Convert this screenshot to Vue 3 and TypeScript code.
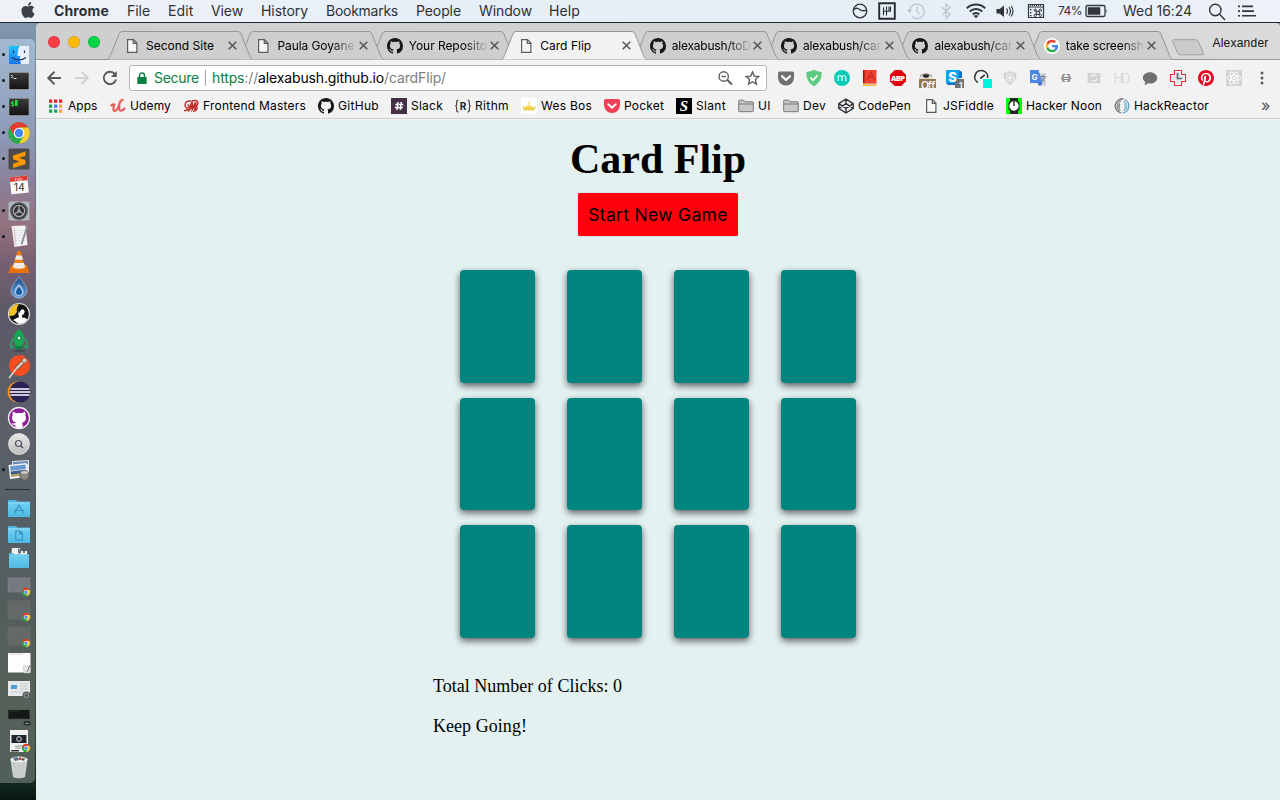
<script setup lang="ts">
import type { Directive } from 'vue'

/* Spreads or tightens a label so it fills the given width in pixels. */
const vFit: Directive<HTMLElement, number | undefined> = {
  mounted(el, binding) {
    if (!binding.value) return
    const count = (el.textContent ?? '').trim().length
    const natural = el.getBoundingClientRect().width
    el.style.letterSpacing = `${((binding.value - natural) / count).toFixed(3)}px`
  },
}

interface Label { text: string; x: number; w: number }
const menus: Label[] = [
  { text: 'Chrome', x: 54, w: 55 },
  { text: 'File', x: 127, w: 23 },
  { text: 'Edit', x: 168, w: 25.5 },
  { text: 'View', x: 211, w: 32 },
  { text: 'History', x: 261, w: 47 },
  { text: 'Bookmarks', x: 326, w: 72 },
  { text: 'People', x: 416, w: 45 },
  { text: 'Window', x: 479, w: 53 },
  { text: 'Help', x: 549, w: 31 },
]
const slot = (list: { x: number }[], i: number) => ({
  width: i + 1 < list.length ? `${list[i + 1].x - list[i].x}px` : 'auto',
})

const status = ['ring', 'tuning', 'history', 'bluetooth', 'wifi', 'sound', 'keys']
const statusSlots = [27, 29, 30, 30, 29, 31, 34]

interface Tab { title: string; icon: string; active?: boolean; w: number; cut?: boolean }
const tabs: Tab[] = [
  { title: 'Second Site', icon: 'page', w: 68 },
  { title: 'Paula Goyane', icon: 'page', w: 77, cut: true },
  { title: 'Your Reposito', icon: 'github', w: 78, cut: true },
  { title: 'Card Flip', icon: 'page', active: true, w: 51 },
  { title: 'alexabush/toD', icon: 'github', w: 79, cut: true },
  { title: 'alexabush/car', icon: 'github', w: 78, cut: true },
  { title: 'alexabush/car', icon: 'github', w: 78, cut: true },
  { title: 'take screensh', icon: 'google', w: 78, cut: true },
]

const extensions = [
  'pocket-grey', 'shield', 'momentum', 'book', 'abp', 'off', 'similar', 'gauge', 'guard',
  'translate', 'json', 'camera', 'hd', 'bubble', 'cross', 'pinterest', 'react', 'dots',
]

interface Bookmark extends Label { icon: string }
const bookmarks: Bookmark[] = [
  { text: 'Apps', icon: 'apps', x: 48, w: 29.5 },
  { text: 'Udemy', icon: 'udemy', x: 110, w: 41 },
  { text: 'Frontend Masters', icon: 'masters', x: 183, w: 103 },
  { text: 'GitHub', icon: 'github', x: 318, w: 41 },
  { text: 'Slack', icon: 'slack', x: 391, w: 32 },
  { text: 'Rithm', icon: 'rithm', x: 455, w: 34 },
  { text: 'Wes Bos', icon: 'crown', x: 521, w: 51 },
  { text: 'Pocket', icon: 'pocket', x: 604, w: 40 },
  { text: 'Slant', icon: 'slant', x: 676, w: 30 },
  { text: 'UI', icon: 'folder', x: 738, w: 13 },
  { text: 'Dev', icon: 'folder', x: 783, w: 23 },
  { text: 'CodePen', icon: 'codepen', x: 838, w: 53 },
  { text: 'JSFiddle', icon: 'page', x: 923, w: 51 },
  { text: 'Hacker Noon', icon: 'noon', x: 1006, w: 76 },
  { text: 'HackReactor', icon: 'reactor', x: 1114, w: 75 },
]

interface DockItem { icon: string; running?: boolean }
const dockApps: DockItem[] = [
  { icon: 'finder', running: true }, { icon: 'terminal', running: true },
  { icon: 'iterm', running: true }, { icon: 'chrome', running: true },
  { icon: 'sublime', running: true }, { icon: 'calendar' },
  { icon: 'prefs', running: true }, { icon: 'textedit', running: true },
  { icon: 'vlc' }, { icon: 'drop' }, { icon: 'scratch' }, { icon: 'rocket' },
  { icon: 'postman' }, { icon: 'eclipse' }, { icon: 'ghdesktop' },
  { icon: 'lens' }, { icon: 'preview', running: true },
]
const dockRest = [
  'f-apps', 'f-docs', 'f-down', 'w-blank', 'w-dim', 'w-dim', 'w-white', 'w-prefs', 'w-term', 'w-page', 'trash',
]

/* Lettering that sits on top of an icon, in the icon's own coordinates. */
interface Glyph {
  t: string; x: number; y: number; size: number; fill: string
  family?: string; weight?: number; slant?: string; len?: number
}
const glyphs: Record<string, Glyph[]> = {
  abp: [{ t: 'ABP', x: 10, y: 12.9, size: 7.6, fill: '#fff', family: 'Open Sans, sans-serif', weight: 800, len: 14 }],
  off: [{ t: 'Off', x: 12, y: 20.6, size: 10, fill: '#fff', family: 'Open Sans, sans-serif', weight: 600, len: 14 }],
  similar: [
    { t: 'S', x: 8.5, y: 14, size: 13, fill: '#fff', weight: 800 },
    { t: '1', x: 17, y: 20, size: 9.5, fill: '#fff', family: 'Open Sans, sans-serif', weight: 600 },
  ],
  translate: [{ t: 'G', x: 6.5, y: 11.7, size: 8, fill: '#fff', weight: 700 }],
  json: [{ t: '{=}', x: 10, y: 13.2, size: 9.5, fill: '#858585', family: 'DejaVu Sans, sans-serif', weight: 700, len: 13 }],
  hd: [{ t: 'HD', x: 10, y: 14.8, size: 13, fill: '#d7d7d7', len: 17 }],
  rithm: [{ t: 'R', x: 8, y: 11.7, size: 10, fill: '#222', weight: 700 }],
  slant: [{ t: 'S', x: 8, y: 13, size: 15, fill: '#fff', family: 'Liberation Serif, serif', weight: 700, slant: 'italic' }],
  iterm: [{ t: '$', x: 6.7, y: 12, size: 7, fill: '#1ee03b', family: 'DejaVu Sans Mono, monospace', weight: 700 }],
  calendar: [
    { t: 'FEB', x: 12.5, y: 8.6, size: 4, fill: '#fff' },
    { t: '14', x: 13.3, y: 18.8, size: 10.5, fill: '#333' },
  ],
}

const cards = Array.from({ length: 12 }, (_, i) => i)
const clicks = 0
</script>

<template>
  <svg class="defs" width="0" height="0" aria-hidden="true">
    <defs>
      <linearGradient id="g-dark" x2="0" y2="1"><stop offset="0" stop-color="#3b3b3b" /><stop offset="1" stop-color="#141414" /></linearGradient>
      <linearGradient id="g-folder" x2="0" y2="1"><stop offset="0" stop-color="#6fd0f3" /><stop offset="1" stop-color="#4fb9e3" /></linearGradient>
      <linearGradient id="g-finder" x2="0" y2="1"><stop offset="0" stop-color="#1fc3fb" /><stop offset="1" stop-color="#1b77ee" /></linearGradient>
      <linearGradient id="g-drop" x2="0" y2="1"><stop offset="0" stop-color="#1f4c86" /><stop offset="1" stop-color="#6fa6dd" /></linearGradient>
      <linearGradient id="g-silver" x2="0" y2="1"><stop offset="0" stop-color="#e8e8e8" /><stop offset="1" stop-color="#bdbdbd" /></linearGradient>
    </defs>

    <symbol id="apple" viewBox="0 0 24 24"><path fill="#3c4148" d="M12.152 6.896c-.948 0-2.415-1.078-3.96-1.04-2.04.027-3.91 1.183-4.961 3.014-2.117 3.675-.546 9.103 1.519 12.09 1.013 1.454 2.208 3.09 3.792 3.039 1.52-.065 2.09-.987 3.935-.987 1.831 0 2.35.987 3.96.948 1.637-.026 2.676-1.48 3.676-2.948 1.156-1.688 1.636-3.325 1.662-3.415-.039-.013-3.182-1.221-3.22-4.857-.026-3.04 2.48-4.494 2.597-4.559-1.429-2.09-3.623-2.324-4.39-2.376-2-.156-3.675 1.09-4.61 1.09zM15.53 3.83c.843-1.012 1.4-2.427 1.245-3.83-1.207.052-2.662.805-3.532 1.818-.78.896-1.454 2.338-1.273 3.714 1.338.104 2.715-.688 3.559-1.701" /></symbol>
    <symbol id="ring" viewBox="0 0 20 20"><g fill="none" stroke="#30353c" stroke-width="1.3"><circle cx="10" cy="10" r="6.8" /><path d="M4 9q1.500-2.500 4-1.500c2 1 2.500 2 4.500 2.200s3-.2 4-1" /></g></symbol>
    <symbol id="tuning" viewBox="0 0 20 20"><g fill="none" stroke="#282d35"><path stroke-width="1.900" d="M2.200 2.200h15.600v15.600h-15.600z" /><path stroke-width="1.100" d="M6.500 6.200v8M6.500 10.200h7M9.500 5.500v9M13.500 5.500v4.700M12 5.500v4.500" /></g></symbol>
    <symbol id="history" viewBox="0 0 20 20"><g fill="none" stroke="#bcc4ce" stroke-width="1.300"><path d="M3.600 10.500V9.800A7.300 7.300 0 1 1 6 15.800M11 5.500V10.500l2.500 2" /></g><path fill="#bcc4ce" d="M.5 8.500h6L3.500 12z" /></symbol>
    <symbol id="bluetooth" viewBox="0 0 20 20"><path fill="none" stroke="#bcc4ce" stroke-width="1.200" d="M6 6.200l8 7.300-4 4V3l4 3.500L6 14" /></symbol>
    <symbol id="wifi" viewBox="0 0 20 20"><g fill="none" stroke="#30353c" stroke-width="2"><path d="M.8 7.300a13.200 13.200 0 0 1 18.400 0" /><path d="M3.800 10.500a9 9 0 0 1 12.400 0" /><path d="M6.700 13.400a4.800 4.800 0 0 1 6.600 0" /></g><path fill="#30353c" d="M7.800 15a3.200 3.200 0 0 1 4.400 0L10 17.300z" /></symbol>
    <symbol id="sound" viewBox="0 0 20 20"><path fill="#30353c" d="M1.500 8v4.500h3L9 16V4.500L4.500 8z" /><path fill="none" stroke="#30353c" stroke-width="1.200" d="M11.500 7.500q2 2.700 0 5.500M14 6q3 4 0 8.500M16.200 5q3.500 5 0 10.500" /></symbol>
    <symbol id="keys" viewBox="0 0 20 20"><path fill="none" stroke="#30353c" stroke-width="1.200" d="M2.500 3.500h15v13h-15z" /><path fill="#30353c" d="M2 5.500h16v1H2zM4 4h1v1H4zM6 4h1v1H6zM8 4h1v1H8zM10 4h1v1h-1zM12 4h1v1h-1zM14 4h1v1h-1zM4 8h1.500v1.200H4zM4 11h1.500v1.200H4zM4 14h1.500v1.200H4z" /><path fill="none" stroke="#30353c" d="M10.300 10.300h3v3h-3zM10.300 10.300H9.100a1.100 1.100 0 1 1 1.200-1.200zM13.300 10.300V9.100a1.100 1.100 0 1 1 1.200 1.200zM10.300 13.300v1.200a1.100 1.100 0 1 1-1.200-1.200zM13.300 13.300h1.200a1.100 1.100 0 1 1-1.200 1.200z" /></symbol>
    <symbol id="battery" viewBox="0 0 24 14"><rect x="1" y="1.500" width="19" height="11" rx="1.500" fill="none" stroke="#30353c" stroke-width="1.300" /><path fill="#30353c" d="M2.800 3.300h12.500v7.400H2.800zM21.300 5q1.500 2 0 4z" /></symbol>
    <symbol id="spot" viewBox="0 0 20 20"><g fill="none" stroke="#30353c" stroke-width="1.400"><circle cx="8.300" cy="8" r="5.700" /><path d="M12.400 12.100l5.600 5.900" /></g></symbol>
    <symbol id="list" viewBox="0 0 20 14"><path fill="#30353c" d="M1 1.500h2v1.700H1zM1 6.200h2v1.700H1zM1 10.900h2v1.700H1zM5 1.500h11v1.700H5zM5 6.200h12v1.700H5zM5 10.900h14v1.700H5z" /></symbol>

    <symbol id="page" viewBox="0 0 16 16"><path fill="#f7f7f7" stroke="#5c5c5c" stroke-width="1.200" d="M3.600 1.600h5.900l3.400 3.500v9.300H3.600zM9.300 1.800v3.500h3.400" /></symbol>
    <symbol id="github" viewBox="0 0 16 16"><path fill="#191717" d="M8 0C3.580 0 0 3.580 0 8c0 3.540 2.290 6.530 5.470 7.590.4.070.55-.17.55-.38 0-.19-.01-.82-.01-1.490-2.010.37-2.530-.49-2.690-.94-.09-.23-.48-.94-.82-1.130-.28-.15-.68-.52-.01-.53.63-.01 1.080.58 1.230.82.72 1.210 1.870.87 2.330.66.07-.52.28-.87.51-1.070-1.780-.2-3.640-.89-3.640-3.950 0-.87.31-1.590.82-2.150-.08-.2-.36-1.020.08-2.120 0 0 .67-.21 2.200.82.64-.18 1.320-.27 2-.27s1.360.09 2 .27c1.530-1.040 2.200-.82 2.200-.82.44 1.100.16 1.920.08 2.120.51.56.82 1.270.82 2.150 0 3.070-1.870 3.750-3.650 3.950.29.25.54.73.54 1.480 0 1.070-.01 1.930-.01 2.200 0 .21.15.46.55.38A8.010 8.010 0 0 0 16 8c0-4.420-3.580-8-8-8z" /></symbol>
    <symbol id="google" viewBox="0 0 48 48"><circle cx="24" cy="24" r="24" fill="#fff" /><g transform="translate(5 5) scale(.79)"><path fill="#EA4335" d="M24 9.500c3.540 0 6.710 1.220 9.210 3.600l6.850-6.850C35.900 2.380 30.470 0 24 0 14.620 0 6.510 5.380 2.560 13.220l7.980 6.190C12.430 13.720 17.740 9.500 24 9.500z" /><path fill="#4285F4" d="M46.980 24.550c0-1.570-.15-3.090-.38-4.550H24v9.020h12.940c-.58 2.960-2.260 5.480-4.780 7.180l7.730 6c4.510-4.180 7.090-10.360 7.090-17.650z" /><path fill="#FBBC05" d="M10.530 28.590c-.48-1.450-.76-2.990-.76-4.590s.27-3.140.76-4.590l-7.980-6.190C.92 16.460 0 20.120 0 24c0 3.880.92 7.540 2.560 10.780l7.970-6.190z" /><path fill="#34A853" d="M24 48c6.480 0 11.930-2.130 15.890-5.810l-7.730-6c-2.150 1.450-4.920 2.300-8.160 2.300-6.260 0-11.570-4.220-13.470-9.910l-7.980 6.190C6.510 42.620 14.620 48 24 48z" /></g></symbol>

    <symbol id="back" viewBox="0 0 16 16"><path fill="none" stroke="#5a5a5a" stroke-width="1.900" d="M15 8H2.500M8.500 1.800L2.200 8l6.300 6.200" /></symbol>
    <symbol id="forward" viewBox="0 0 16 16"><path fill="none" stroke="#d0d0d0" stroke-width="1.900" d="M1 8h12.500M7.500 1.800L13.800 8l-6.300 6.200" /></symbol>
    <symbol id="reload" viewBox="0 0 16 16"><path fill="none" stroke="#5a5a5a" stroke-width="1.900" d="M13 4.200A6.200 6.200 0 1 0 14 9.500" /><path fill="#5a5a5a" d="M14.800 1v6H8.800z" /></symbol>
    <symbol id="lock" viewBox="0 0 10 13"><path fill="#0b8043" d="M1 5h8q.7 0 .7.700v5.600q0 .7-.7.700H1q-.7 0-.7-.7V5.700Q.3 5 1 5z" /><path fill="none" stroke="#0b8043" stroke-width="1.400" d="M2.500 5.500V3.500a2.500 2.500 0 0 1 5 0v2" /></symbol>
    <symbol id="zoomout" viewBox="0 0 16 16"><g fill="none" stroke="#606060"><circle cx="6.700" cy="6.500" r="4.700" stroke-width="1.400" /><path stroke-width="1.400" d="M4.500 6.500h4.400" /><path stroke-width="2" d="M10.200 10l4.800 4.500" /></g></symbol>
    <symbol id="star" viewBox="0 0 16 16"><path fill="none" stroke="#5c5c5c" stroke-width="1.400" d="M8.500 2l1.800 4.100 4.500.4-3.400 3.100 1 4.500-3.900-2.400-3.900 2.400 1-4.500-3.400-3.100 4.500-.4z" /></symbol>

    <symbol id="pocket-grey" viewBox="0 0 20 20"><path fill="#6f6f6f" d="M3.500 3.500h13q1.500 0 1.500 1.500v4.500a8 8 0 0 1-16 0V5q0-1.500 1.500-1.500z" /><path fill="none" stroke="#fff" stroke-width="2.200" stroke-linecap="round" stroke-linejoin="round" d="M6 8.200l4 3.700 4-3.700" /></symbol>
    <symbol id="shield" viewBox="0 0 20 20"><path fill="#5ecb80" d="M10 1.800q3.500 2 7.700 2.200Q18 14 10 18.300 2 14 2.300 4 6.500 3.800 10 1.800z" /><path fill="none" stroke="#fff" stroke-width="1.700" d="M6.500 9.700l2.500 2.500 4.500-5" /></symbol>
    <symbol id="momentum" viewBox="0 0 20 20"><circle cx="10" cy="10" r="8" fill="#00ccb8" /><path fill="none" stroke="#fff" stroke-width="1.200" d="M6.200 13V7.500M6.200 9q.3-1.500 1.800-1.500T10 9.500V13M10 9.500q.2-2 1.900-2t1.900 2V13" /></symbol>
    <symbol id="book" viewBox="0 0 20 20"><path fill="#ef4031" d="M3 2h13.500v14H3z" /><path fill="#8a1b13" d="M3 2h1.500v13H3z" /><path fill="#f5bd35" d="M3 15.200h2V18H3zM3 17h13.500v1H3z" /><path fill="#e0c9a5" d="M5 15.500h11.500V17H5z" /><path fill="none" stroke="#c92f20" stroke-width="1.400" d="M7.500 12L11 4.500l3.500 7.500M9 9.300h4" /></symbol>
    <symbol id="abp" viewBox="0 0 20 20"><path fill="#e2000f" d="M6.700 2h6.600L18 6.700v6.600L13.300 18H6.700L2 13.300V6.700z" /></symbol>
    <symbol id="off" viewBox="0 0 20 20"><path fill="#e2ddd4" d="M3 9q7-6 14 0v3H3z" /><path fill="none" stroke="#8a7d6a" d="M4 8q6-4.500 12 0" /><ellipse cx="10" cy="8" rx="3" ry="1.700" fill="#222" /><rect x="3" y="11" width="18" height="11.500" rx="1" fill="#957653" /></symbol>
    <symbol id="similar" viewBox="0 0 20 20"><path fill="#0ba4f5" d="M2 2h13v13H2z" /><path fill="#0a6ebd" d="M2 15h9v2H4zM15 2l3 2v6h-3z" /><rect x="11" y="11" width="11" height="11" fill="#6e7276" /></symbol>
    <symbol id="gauge" viewBox="0 0 20 20"><path fill="none" stroke="#383838" stroke-width="1.700" d="M5.800 14.500A6.500 6.500 0 1 1 15.700 10M8.300 10.500l4.500-3.700" /><rect x="11" y="11" width="11" height="11" fill="#00f5e1" /></symbol>
    <symbol id="guard" viewBox="0 0 20 20"><path fill="#d4d4d4" d="M10 3q3 1.800 6.500 2Q17 13 10 17 3 13 3.500 5 7 4.800 10 3z" /><circle cx="10" cy="9.700" r="3.500" fill="none" stroke="#f0f0f0" stroke-width="1.100" /><path fill="#f4f4f4" d="M10 7.500l2.200 2.200L10 12 7.800 9.700z" /></symbol>
    <symbol id="translate" viewBox="0 0 20 20"><path fill="#d4d6d9" d="M9 5h9v13H10z" /><path fill="#4b86e8" d="M2 2h8.500l4 13H2z" /><path fill="#3568c6" d="M9.500 15h5l-2.500 3z" /><path fill="none" stroke="#6a7f92" d="M12.500 8.500h5M15 7v1.500M16.800 8.500q-.8 3-3.300 5M13.500 9.500q1 2.500 3.500 4" /></symbol>
    <symbol id="json" viewBox="0 0 20 20"></symbol>
    <symbol id="camera" viewBox="0 0 20 20"><rect x="3.500" y="5" width="13" height="10" rx="1.500" fill="#d2d2d2" /><path fill="none" stroke="#f3f3f3" stroke-width="1.400" d="M7.200 9.500A3 3 0 0 1 12.500 8M12.800 10.500A3 3 0 0 1 7.500 12" /></symbol>
    <symbol id="hd" viewBox="0 0 20 20"></symbol>
    <symbol id="bubble" viewBox="0 0 20 20"><path fill="#707070" d="M10 4.200c4 0 7.200 2.500 7.200 5.700s-3.200 5.600-7.200 5.600q-1 0-2-.2-1.300 1.500-3.500 1.700l.9-2.800Q2.800 12.500 2.800 9.900c0-3.200 3.200-5.700 7.200-5.700z" /></symbol>
    <symbol id="cross" viewBox="0 0 20 20"><path fill="#fff" stroke="#e02c3c" stroke-width="1.100" d="M6.500 2.500h7v4h4v7h-4v4h-7v-4h-4v-7h4z" /><path fill="#e3e7e9" d="M8 4h4v12H8zM4 8h12v4H4z" /><path fill="none" stroke="#666" stroke-width="1.700" d="M9.500 5v5.500H14" /></symbol>
    <symbol id="pinterest" viewBox="-3 -3 30 30"><circle cx="12" cy="12" r="11" fill="#fff" /><path fill="#e00b24" d="M12.017 0C5.396 0 .029 5.367.029 11.987c0 5.079 3.158 9.417 7.618 11.162-.105-.949-.199-2.403.041-3.439.219-.937 1.406-5.957 1.406-5.957s-.359-.72-.359-1.781c0-1.663.967-2.911 2.168-2.911 1.024 0 1.518.769 1.518 1.688 0 1.029-.653 2.567-.992 3.992-.285 1.193.6 2.165 1.775 2.165 2.128 0 3.768-2.245 3.768-5.487 0-2.861-2.063-4.869-5.008-4.869-3.410 0-5.409 2.562-5.409 5.199 0 1.033.394 2.143.889 2.741.099.12.112.225.085.345-.09.375-.293 1.199-.334 1.363-.053.225-.172.271-.401.165-1.495-.69-2.433-2.878-2.433-4.646 0-3.776 2.748-7.252 7.920-7.252 4.158 0 7.392 2.967 7.392 6.923 0 4.135-2.607 7.462-6.233 7.462-1.214 0-2.354-.629-2.758-1.379l-.749 2.848c-.269 1.045-1.004 2.352-1.498 3.146 1.123.345 2.306.535 3.550.535 6.607 0 11.985-5.365 11.985-11.987C24 5.390 18.592 0 12.017 0z" /></symbol>
    <symbol id="react" viewBox="0 0 20 20"><path fill="#d3d3d3" d="M2 2h16v16H2z" /><g fill="none" stroke="#fff" stroke-width=".9"><ellipse cx="10" cy="10" rx="6.700" ry="2.600" /><ellipse cx="10" cy="10" rx="6.700" ry="2.600" transform="rotate(60 10 10)" /><ellipse cx="10" cy="10" rx="6.700" ry="2.600" transform="rotate(120 10 10)" /></g><circle cx="10" cy="10" r="1.300" fill="#fff" /></symbol>
    <symbol id="dots" viewBox="0 0 20 20"><g fill="#5a5a5a"><circle cx="10" cy="5" r="1.500" /><circle cx="10" cy="10" r="1.500" /><circle cx="10" cy="15" r="1.500" /></g></symbol>

    <symbol id="apps" viewBox="0 0 16 16"><path fill="#e3222a" d="M1 1.500h3.200v3.200H1zM6 1.500h3.200v3.200H6zM11 1.500h3.200v3.200H11z" /><path fill="#16a05a" d="M1 6.500h3.200v3.200H1zM1 11.500h3.200v3.200H1z" /><path fill="#3c7ef0" d="M6 6.500h3.200v3.200H6z" /><path fill="#16a05a" d="M6 11.500h3.200v3.200H6z" /><path fill="#f7a823" d="M11 6.500h3.200v3.200H11zM11 11.500h3.200v3.200H11z" /></symbol>
    <symbol id="udemy" viewBox="0 0 16 16"><path fill="none" stroke="#ec5e5c" stroke-width="2.200" stroke-linecap="round" stroke-linejoin="round" d="M1.300 7.500Q3 6 4.200 6.500 2.500 12.500 4.500 13q3 0 5-7.500-1 7 .8 7.200Q12.500 13 14.500 10.500M9.700 5q.3-2.200 3-3.200" /></symbol>
    <symbol id="masters" viewBox="0 0 16 16"><g fill="none" stroke="#c02d28"><path stroke-width="1.400" d="M8.500 3.300C5 2.500 2 4 2 7s2 3.500 3.500 2.500S6 6.500 4.500 7M1 12.500q2 .5 3.500-1.500" /><path stroke-width="1.900" d="M5 13.300Q8 10 9 4l.3 7 3.500-6.500-.8 8" /><path stroke-width="1.400" d="M9 3q5-1.500 5.700 1T13 8.500q2 1 .5 3T10 13" /></g></symbol>
    <symbol id="slack" viewBox="0 0 16 16"><path fill="#453045" d="M0 0h16v16H0z" /><path fill="none" stroke="#fff" stroke-width="1.500" d="M7 4L6 12M10.300 4l-1 8M4.300 6.500h8M3.900 9.500h8" /></symbol>
    <symbol id="rithm" viewBox="0 0 16 16"><path fill="none" stroke="#444" stroke-width="1.200" d="M3.500 2Q1.700 2 1.700 4v2q0 2-1.500 2 1.500 0 1.500 2v2q0 2 1.800 2M12.500 2q1.800 0 1.800 2v2q0 2 1.500 2-1.500 0-1.500 2v2q0 2-1.800 2" /></symbol>
    <symbol id="crown" viewBox="0 0 16 16"><path fill="#fff" d="M0 0h16v16H0z" /><path fill="#ecd04a" d="M1 8l3.500 1.500L5.500 7 7 9l1-4 1 4 1.500-2 1 2.500L15 8l-2 4.500H3z" /><circle cx="8" cy="4.700" r=".9" fill="#ecd04a" /></symbol>
    <symbol id="pocket" viewBox="0 0 16 16"><path fill="#ee4056" d="M1.500 1h13Q16 1 16 2.500V7A8 8 0 0 1 0 7V2.500Q0 1 1.500 1z" /><path fill="none" stroke="#fff" stroke-width="1.900" stroke-linecap="round" stroke-linejoin="round" d="M4.300 6.200L8 9.700l3.700-3.500" /></symbol>
    <symbol id="slant" viewBox="0 0 16 16"><path fill="#000" d="M0 0h16v16H0z" /></symbol>
    <symbol id="folder" viewBox="0 0 16 16"><path fill="#c9c9c9" stroke="#777" d="M.7 13V3q0-.8.8-.8h4.200l1.500 1.600h7.300q.8 0 .8.800V13q0 .7-.8.700H1.500q-.8 0-.8-.7zM1 6h14" /></symbol>
    <symbol id="codepen" viewBox="0 0 16 16"><path fill="none" stroke="#303237" stroke-width="1.400" stroke-linejoin="round" d="M8 1l7.200 4.600v4.800L8 15 .8 10.400V5.600zM.8 5.600L8 10.400l7.200-4.800M.8 10.400L8 5.600l7.200 4.800M8 1v4.600M8 10.400V15" /></symbol>
    <symbol id="noon" viewBox="0 0 16 16"><path fill="#0f0" d="M0 0h16v16H0z" /><path fill="#252525" d="M4 0h8v3l1.500 2v6L12 13v3H4v-3l-1.500-2V5L4 3z" /><circle cx="8" cy="8" r="4.700" fill="#fff" /><path fill="none" stroke="#222" stroke-width="1.300" d="M8 8V3" /></symbol>
    <symbol id="reactor" viewBox="0 0 16 16"><g fill="none" stroke-width="1.300"><path stroke="#6e7173" d="M9.500 1.100A7 7 0 0 0 7 14.900" /><path stroke="#85888a" d="M7 3.200A5 5 0 0 0 6.500 12.700" /><path stroke="#777" d="M6 5.700a3 3 0 0 0 0 4.600" /><path stroke="#5ba3cb" d="M10.500 1.500A7 7 0 0 1 8.500 14.900" /><path stroke="#79b5d6" d="M9.500 3.500a4.800 4.800 0 0 1 0 9" /><path stroke="#9bc5dc" d="M10 5.700a3 3 0 0 1 0 4.600" /></g></symbol>

    <symbol id="finder" viewBox="0 0 26 26"><path fill="#e9eff8" d="M3 4h20v18H3z" /><path fill="url(#g-finder)" d="M3 4h10.500Q11 9 11.500 14H14q0 5 1 8H3z" /><path fill="none" stroke="#16345a" stroke-width="1.200" d="M7.500 8.500v2.500M18.500 8.500v2.500M6 15.500q7 5 14 0" /></symbol>
    <symbol id="terminal" viewBox="0 0 26 26"><rect x="2.500" y="4" width="21" height="18" rx="1" fill="#aeb3b8" /><rect x="3.300" y="4.700" width="19.400" height="16.500" fill="url(#g-dark)" /><path fill="none" stroke="#ddd" d="M5 7l2 1.500L5 10M7.500 10.500h3" /></symbol>
    <symbol id="iterm" viewBox="0 0 26 26"><rect x="2.500" y="4" width="21" height="18" rx="1" fill="#9ba1a8" /><rect x="3.300" y="4.700" width="19.400" height="16.500" fill="url(#g-dark)" /><path fill="#1ee03b" d="M9 6h2.700v6H9z" /></symbol>
    <symbol id="chrome" viewBox="0 0 26 26"><circle cx="13" cy="13" r="10.800" fill="#2ca94f" /><path fill="#e33b2e" d="M3.650 7.600a10.800 10.800 0 0 1 18.700 0H13L8.300 15.700z" /><path fill="#fbce35" d="M22.350 7.600A10.800 10.800 0 0 1 13 23.800l4.700-8.100L13 7.600z" /><circle cx="13" cy="13" r="5.300" fill="#fff" /><circle cx="13" cy="13" r="4.200" fill="#4285f4" /></symbol>
    <symbol id="sublime" viewBox="0 0 26 26"><rect x="2.500" y="2.500" width="21" height="21" rx="1.500" fill="#4b4b4b" /><path fill="#ff9800" d="M7 9.500l12.500-4v4.300L13 12l6.500 2v4.300L7 22v-4.200l6.500-2.300L7 13.300z" /></symbol>
    <symbol id="calendar" viewBox="0 0 26 26"><g transform="rotate(-6 13 13)"><path fill="#fbfbfb" d="M4.500 4.500h17.500v17H4.500z" /><path fill="#e23a36" d="M4.500 4.500h17.500v4.700H4.500z" /></g></symbol>
    <symbol id="prefs" viewBox="0 0 26 26"><rect x="2.500" y="3.500" width="21" height="19" rx="1.500" fill="#aeb6bc" /><circle cx="13" cy="13" r="8.700" fill="#303236" /><circle cx="13" cy="13" r="5.700" fill="none" stroke="#aaa" stroke-width="1.300" /><circle cx="13" cy="13" r="1.800" fill="#999" /><path stroke="#aaa" stroke-width="1.200" d="M13 13V7M13 13l-5 3.500M13 13l5 3.500" /><circle cx="13" cy="13" r="7.900" fill="none" stroke="#b0b0b0" stroke-width=".7" stroke-dasharray="1 1" /></symbol>
    <symbol id="textedit" viewBox="0 0 26 26"><path fill="#f4f4f6" d="M5.500 3l14-.5 2 19.500-13 2z" /><path stroke="#dcdde2" stroke-width=".8" d="M7 7.500h12M7 10h12M7.500 12.500h12M7.500 15h12M8 17.500h12" /><path stroke="#d99" stroke-width=".6" d="M8 3.500L10 23" /><path stroke="#8b8f96" stroke-width="1.800" d="M21.500 2.500l-6 19" /></symbol>
    <symbol id="vlc" viewBox="0 0 26 26"><path fill="#e8710d" d="M5 16h16l2.500 8H2.500z" /><path fill="#f07d12" d="M11.500 2h3l5 17q-6.500 3.500-13 0z" /><path fill="#f0ebe6" d="M10.200 6.500h5.600l1.200 4.200H9zM8 14h10l1.200 4.500q-6 2.500-12.400 0z" /></symbol>
    <symbol id="drop" viewBox="0 0 26 26"><path fill="url(#g-drop)" stroke="#9fb9d4" stroke-width=".7" d="M13 2q8 9 8 13.500a8 7.700 0 0 1-16 0Q5 11 13 2z" /><path fill="#a9c9e8" d="M13 9q4.500 4 4.500 7.500a4.500 4.500 0 0 1-9 0Q8.500 13 13 9z" /><path fill="#1e5c9e" d="M13 11.500q3 3.500 3 5.500a3 3 0 0 1-6 0q0-2 3-5.500z" /></symbol>
    <symbol id="scratch" viewBox="0 0 26 26"><circle cx="13" cy="13" r="10.500" fill="#141414" stroke="#ddd" stroke-width="1.200" /><path fill="#f5c322" d="M3.300 15A10 10 0 0 1 13 3.200Q10 7 11 11L8 14.500z" /><path fill="#fff" d="M14 5.500q4 0 5 3.500l-1 4-2 1v2.500q4 0 5.500 2-3.500 4-8.500 4.500L7 19l6-3-1-4z" /><path fill="#111" d="M12.500 5q7-3.500 9 4.500l.5 6-3.500 1 .5-6q-2-3.500-4-1.500L12.500 13z" /></symbol>
    <symbol id="rocket" viewBox="0 0 26 26"><ellipse cx="13" cy="24" rx="7" ry="1.200" fill="#444b50" /><g fill="none" stroke="#2aa35c" stroke-width="1.600"><path d="M8.500 11Q5 13 5 17.500V21l3-2M17.500 11q3.500 2 3.500 6.500V21l-3-2" /></g><path fill="#19a854" d="M13 2q5 4.500 5 9.500T16 19h-6q-2-2.500-2-7.500T13 2z" /><path fill="#0b7b42" d="M10 19h6v3h-6z" /><circle cx="13" cy="11" r="2" fill="#dff6e8" stroke="#0b7b42" /></symbol>
    <symbol id="postman" viewBox="0 0 26 26"><circle cx="13.500" cy="12.500" r="10.500" fill="#f94d1f" /><g stroke-linecap="round"><path stroke="#6d4a3c" stroke-width="4.500" d="M17 9l-6 6" /><path stroke="#d8c8bc" stroke-width="2.700" d="M17 9l-6 6" /><path stroke="#d8d2cc" stroke-width="1.700" d="M10 16l-6.500 8.500" /></g><circle cx="18.500" cy="7.500" r="2.500" fill="#d8c8bc" stroke="#6d4a3c" stroke-width=".7" /></symbol>
    <symbol id="eclipse" viewBox="0 0 26 26"><circle cx="12" cy="13" r="10.500" fill="#f6941e" /><circle cx="14" cy="13" r="10.500" fill="#2c2255" /><path stroke="#fff" stroke-width="1.600" d="M4.500 10h19M3.800 13h20.500M4.500 16h19" /></symbol>
    <symbol id="ghdesktop" viewBox="0 0 26 26"><circle cx="13" cy="13" r="10.500" fill="#8c1f94" stroke="#f3eaf3" stroke-width="1.300" /><path fill="#fff" d="M7 6.500l3.300 1.800q2.700-.6 5.400 0L19 6.500q.8 2.300.3 4 1 1.500.6 3.600-.6 3-4 3.600.9 1 .8 3v1.500q-3.700 1.500-7.400 0V20q-2.800.5-3.800-2 1.800.8 3.900.1l.6-.5q-3.300-.6-3.900-3.500-.4-2.200.6-3.600-.5-1.700.3-4z" /></symbol>
    <symbol id="lens" viewBox="0 0 26 26"><circle cx="13" cy="13" r="10.500" fill="url(#g-silver)" stroke="#f3f3f3" stroke-width=".7" /><circle cx="12.500" cy="12.500" r="3" fill="none" stroke="#50545a" stroke-width="1.200" /><path stroke="#50545a" stroke-width="1.500" d="M14.700 14.700l2.300 2.300" /></symbol>
    <symbol id="preview" viewBox="0 0 26 26"><path fill="#dfe4e8" d="M6 4l17-1v12L6 17z" /><path fill="#6d89b8" d="M7 5l15-1v3L7 8z" /><path fill="#f5f5f5" d="M2.500 8l18-2 1.500 14-18 2z" /><path fill="#6a98d0" d="M4 9.300l15.500-1.700.5 4.500L4.500 14z" /><path fill="#39608c" d="M4.500 14.500L20 12.700l.5 3L5 18z" /><path fill="#b9a06a" d="M5 17.500l15.500-2 .2 2.500L5 20z" /><circle cx="18.500" cy="18.500" r="4.700" fill="#8d8a80" stroke="#5b5b58" /><ellipse cx="18.500" cy="15.500" rx="4" ry="1.800" fill="#c8cdd0" stroke="#666" stroke-width=".6" /></symbol>

    <symbol id="folderbase" viewBox="0 0 26 26"><path fill="#4cb4df" d="M2 5h8l1.500 1.500H24V10H2z" /><path fill="url(#g-folder)" d="M2 7.500h22V22H2z" /><path fill="#a3e4fa" d="M2 7.500h22v.8H2z" /></symbol>
    <symbol id="f-apps" viewBox="0 0 26 26"><use href="#folderbase" /><path fill="none" stroke="#3495c0" stroke-width="1.200" d="M13 10l-4.500 8.500M13 10l4.500 8.500M8 15.500h10" /></symbol>
    <symbol id="f-docs" viewBox="0 0 26 26"><use href="#folderbase" /><path fill="none" stroke="#3495c0" stroke-width="1.200" d="M9.800 10h4.200l2.500 2.500v6.700H9.800zM13.800 10v3h2.700" /></symbol>
    <symbol id="f-down" viewBox="0 0 26 26"><path fill="#f0f0f0" d="M6 2h8l1 3h6v7H5z" /><path fill="#6a7480" d="M12 2.500l3 1v4h-3zM17 5h2v2h-2z" /><path fill="#4db7e2" d="M3 7h4l1 1.500h15V22H3z" /><path fill="url(#g-folder)" d="M3 8.500h20V22H3z" /></symbol>
    <symbol id="w-blank" viewBox="0 0 26 26"><path fill="#74797f" stroke="#858a90" stroke-width=".6" d="M2 6h22v14H2z" /><use href="#chrome" x="15" y="15" width="10" height="10" /></symbol>
    <symbol id="w-dim" viewBox="0 0 26 26"><path fill="#626968" stroke="#6a7271" stroke-width=".6" d="M2 3h22v18H2z" /><use href="#chrome" x="15" y="14" width="10" height="10" /></symbol>
    <symbol id="w-white" viewBox="0 0 26 26"><path fill="#fdfdfd" d="M2 3h22.500v19.500H2z" /><path stroke="#ccc" stroke-width=".8" d="M3 4h14" /><path fill="#e5e5e5" stroke="#bbb" stroke-width=".5" d="M17 16h6l1 7h-6z" /><path stroke="#777" d="M24 15l-3 7" /></symbol>
    <symbol id="w-prefs" viewBox="0 0 26 26"><path fill="#e6e8e9" d="M2 5h22v15H2z" /><path fill="#4b9bd8" d="M5 9h6v4H5z" /><path stroke="#c6cbcf" d="M14 8h8M14 10.500h8M14 13h8M5 16h13" /><circle cx="20.500" cy="19.500" r="4" fill="#54585c" /><circle cx="20.500" cy="19.500" r="2.300" fill="none" stroke="#999" /></symbol>
    <symbol id="w-term" viewBox="0 0 26 26"><path fill="#151716" stroke="#5e6461" stroke-width=".7" d="M2 7.500h22v9.700H2z" /><path stroke="#245a2c" stroke-width=".7" d="M4 9h10" /><rect x="17.500" y="19" width="7" height="4.500" rx="1.500" fill="#303534" /><path stroke="#9a9f9c" d="M19.500 21.500h3" /></symbol>
    <symbol id="w-page" viewBox="0 0 26 26"><path fill="#f2f2f2" d="M4 2h18v22H4z" /><path fill="#1f2530" d="M5.500 7h15v8h-15z" /><circle cx="13" cy="11" r="2.300" fill="none" stroke="#ddd" /><path stroke="#999" d="M9 18h8M9 20h6" /><path fill="#333" d="M5 22h8v1.500H5z" /><use href="#chrome" x="15" y="15" width="10" height="10" /></symbol>
    <symbol id="trash" viewBox="0 0 26 26"><path fill="#d9dcdc" opacity=".9" d="M4.500 5.500h17L19 23q-6 2.500-12 0z" /><path fill="#c3c9c9" d="M8 8h1.300l1 14H9zM12.400 8h1.200v15h-1.200zM16.700 8H18l-1 14h-1.300z" /><ellipse cx="13" cy="5.500" rx="8.700" ry="3" fill="#edefef" /><path fill="#546d88" d="M7 4l4-1 2 3-4 1z" /><path fill="#a9594f" d="M12 4l3-1 1 3h-3z" /><path fill="#4c5754" d="M16 4l3 .5-1 2h-2z" /></symbol>
  </svg>

  <div class="screen">
    <header class="menubar">
      <svg class="apple"><use href="#apple" /></svg>
      <nav class="menus">
        <div v-for="(m, i) in menus" :key="m.text" class="menu" :style="slot(menus, i)">
          <span v-fit="m.w" class="label">{{ m.text }}</span>
        </div>
      </nav>
      <div class="status">
        <div v-for="(s, i) in status" :key="s" class="stat" :style="{ width: statusSlots[i] + 'px' }">
          <svg width="20" height="20"><use :href="'#' + s" /></svg>
        </div>
        <div class="charge"><span v-fit="24" class="label">74%</span></div>
        <svg class="battery"><use href="#battery" /></svg>
        <div class="clock"><span v-fit="69" class="label">Wed 16:24</span></div>
        <svg class="spot"><use href="#spot" /></svg>
        <svg class="list"><use href="#list" /></svg>
      </div>
    </header>

    <div class="desktop">
      <aside class="side">
        <div class="dock">
          <div v-for="d in dockApps" :key="d.icon" class="dock-item">
            <i class="pip" :class="{ on: d.running }"></i>
            <svg width="26" height="26">
              <use :href="'#' + d.icon" />
              <text v-for="g in glyphs[d.icon]" :key="g.t" :x="g.x" :y="g.y" :font-size="g.size" :fill="g.fill" :font-family="g.family" :font-weight="g.weight" :textLength="g.len" text-anchor="middle">{{ g.t }}</text>
            </svg>
          </div>
          <hr class="rule" />
          <div v-for="(d, i) in dockRest" :key="i" class="dock-item">
            <i class="pip"></i>
            <svg width="26" height="26"><use :href="'#' + d" /></svg>
          </div>
        </div>
      </aside>

      <section class="window">
        <div class="strip">
          <div class="lights"><i class="red"></i><i class="amber"></i><i class="green"></i></div>
          <div class="tabs">
            <div v-for="(t, i) in tabs" :key="i" class="tab" :class="{ active: t.active }" :style="{ zIndex: t.active ? 20 : 10 - i }">
              <svg class="shape" width="146" height="29" viewBox="0 0 146 29"><path d="M0 28.500Q1.500 27 2.500 24.500L11 3Q12 .5 14 .5H130Q132 .5 133 3L141.500 24.500Q142.500 27 144.500 28.500" /></svg>
              <div class="tab-body">
                <svg width="16" height="16" class="favicon"><use :href="'#' + t.icon" /></svg>
                <span class="title" :class="{ cut: t.cut }"><span v-fit="t.w" class="label">{{ t.title }}</span></span>
                <svg class="close" width="9" height="9" viewBox="0 0 9 9"><path d="M.7 .7l7.600 7.600M8.300 .7L.7 8.300" /></svg>
              </div>
            </div>
          </div>
          <svg class="newtab" width="34" height="17" viewBox="0 0 34 17"><path d="M3 .7H24.500Q26.500 .7 27.300 2.500L32.300 14Q33 15.800 31 15.800H9.500Q7.500 15.800 6.700 14L1.500 2.500Q1 .7 3 .7z" /></svg>
          <div class="profile"><span v-fit="56" class="label">Alexander</span></div>
        </div>

        <div class="toolbar">
          <svg class="nav" width="16" height="16"><use href="#back" /></svg>
          <svg class="nav" width="16" height="16"><use href="#forward" /></svg>
          <svg class="nav" width="16" height="16"><use href="#reload" /></svg>
          <div class="omnibox">
            <svg width="10" height="13"><use href="#lock" /></svg>
            <span class="secure"><span v-fit="45" class="label">Secure</span></span>
            <span class="url"><span v-fit="234" class="label"><span class="scheme">https</span><span class="dim">://</span>alexabush.github.io<span class="dim">/cardFlip/</span></span></span>
            <svg class="zoomout" width="16" height="16"><use href="#zoomout" /></svg>
            <svg width="16" height="16"><use href="#star" /></svg>
          </div>
          <div class="extensions">
            <svg v-for="e in extensions" :key="e" width="20" height="20">
              <use :href="'#' + e" />
              <text v-for="g in glyphs[e]" :key="g.t" :x="g.x" :y="g.y" :font-size="g.size" :fill="g.fill" :font-family="g.family" :font-weight="g.weight" :textLength="g.len" text-anchor="middle">{{ g.t }}</text>
            </svg>
          </div>
        </div>

        <div class="bookmarks">
          <div v-for="(b, i) in bookmarks" :key="b.text" class="bookmark" :style="slot(bookmarks, i)">
            <svg width="16" height="16">
              <use :href="'#' + b.icon" />
              <text v-for="g in glyphs[b.icon]" :key="g.t" :x="g.x" :y="g.y" :font-size="g.size" :fill="g.fill" :font-family="g.family" :font-weight="g.weight" :font-style="g.slant" text-anchor="middle">{{ g.t }}</text>
            </svg>
            <span v-fit="b.w" class="label">{{ b.text }}</span>
          </div>
          <span class="more">»</span>
        </div>

        <main class="page">
          <h1>Card Flip</h1>
          <button type="button"><span v-fit="139.5" class="label">Start New Game</span></button>
          <div class="board">
            <div v-for="c in cards" :key="c" class="card"></div>
          </div>
          <div class="notes">
            <p><span v-fit="189" class="label">Total Number of Clicks: {{ clicks }}</span></p>
            <p><span v-fit="94" class="label">Keep Going!</span></p>
          </div>
        </main>
      </section>
    </div>
  </div>
</template>

<style>
body { margin: 0; overflow: hidden; }
</style>

<style scoped>
.defs { position: absolute; }
.screen { width: 1280px; height: 800px; display: flex; flex-direction: column; overflow: hidden; font-family: Inter, Roboto, sans-serif; background: #66788a; }
svg { display: block; flex: none; overflow: visible; }
.label { display: inline-block; white-space: nowrap; }
.menubar { height: 22px; flex: none; display: flex; align-items: center; background: linear-gradient(90deg, #eff3f7, #e6eef8 35%, #e6eef8 70%, #edf2f8); border-bottom: 1px solid #22272d; color: #2c3036; font-size: 14px; line-height: 22px; }
.apple { width: 16px; height: 16px; margin: 0 18px 2px 20px; }
.menus, .status { display: flex; align-items: center; }
.menu { flex: none; }
.menu:first-child { font-weight: 700; }
.status { margin-left: auto; width: 434px; flex: none; }
.stat { flex: none; padding-left: 4px; box-sizing: border-box; }
.charge { width: 27px; margin-left: 2px; font-size: 12px; }
.battery { width: 24px; height: 14px; }
.clock { margin-left: 14px; width: 84px; }
.spot { width: 20px; height: 20px; margin: 2px 10px 0 0; }
.list { width: 20px; height: 14px; }

.desktop { flex: 1; display: flex; min-height: 0; background: linear-gradient(#8199ae, #6d8093 60px, #3e4943 700px, #10251c 765px, #0a1510); }
.side { width: 36px; flex: none; padding-top: 16px; box-sizing: border-box; }
.dock { width: 35px; height: 744px; padding-top: 3px; box-sizing: border-box; border-radius: 0 5px 5px 0; background: linear-gradient(#a2b9d2 0, #8c98b5 100px, #8b7f98 145px, #94727f 185px, #765f70 225px, #5c5a68 275px, #5b6069 400px, #555e65 500px, #555d5c 570px, #566159 650px, #52605a); }
.dock-item { height: 25.930px; display: flex; align-items: center; }
.pip { width: 3px; height: 3px; border-radius: 50%; margin: 0 1px 0 2px; }
.pip.on { background: #10151c; }
.rule { width: 25px; margin: 6px 0 5px 5px; border: 0; border-top: 1px solid #2a2e34; }

.window { flex: 1; min-width: 0; display: flex; flex-direction: column; background: #f2f2f2; border-radius: 5px 5px 0 0; overflow: hidden; }
.strip { height: 37px; flex: none; display: flex; align-items: flex-end; background: linear-gradient(90deg, #cfcfcf, #d2d2d2 60%, #dbdbdb); box-shadow: inset 0 -1px #989898; }
.lights { width: 72px; display: flex; gap: 8px; padding-left: 12px; box-sizing: border-box; align-self: center; }
.lights i { width: 12px; height: 12px; border-radius: 50%; flex: none; box-shadow: inset 0 0 0 .5px #0003; }
.red { background: #fc3b46; }
.amber { background: #fdb90c; }
.green { background: #06d445; }
.tabs { display: flex; flex: none; isolation: isolate; width: 1066px; }
.tab { position: relative; width: 145px; height: 29px; flex: none; margin-right: -13.600px; display: grid; }
.shape { grid-area: 1 / 1; }
.shape path { fill: #cecece; stroke: #969696; stroke-width: 1; }
.active .shape path { fill: #f2f2f2; }
.tab-body { grid-area: 1 / 1; position: relative; display: flex; align-items: center; padding-left: 16px; }
.favicon { margin-right: 6px; }
.title { width: 81px; flex: none; margin-right: .5px; font-size: 12px; line-height: 18px; color: #000; }
.title.cut { mask-image: linear-gradient(90deg, #000 55px, transparent 80px); }
.close path { fill: none; stroke: #5a5a5a; stroke-width: 1.600; }
.newtab { margin: 0 8px 4px -3.500px; }
.newtab path { fill: #cbcbcb; stroke: #a0a0a0; }
.profile { font-family: "Liberation Sans", Arial, sans-serif; font-size: 12px; line-height: 14px; align-self: center; margin-top: 3px; color: #111; }

.toolbar { height: 36px; flex: none; display: flex; align-items: center; padding-left: 10px; }
.nav { margin-right: 12px; }
.omnibox { width: 638px; height: 26px; margin-left: -1px; box-sizing: border-box; border: 1px solid #b4b4b4; border-radius: 3px; background: #fff; display: flex; align-items: center; padding: 0 6px 0 7px; font-size: 14px; line-height: 20px; color: #000; }
.secure { width: 51px; margin-left: 7px; color: #0b8043; border-right: 1px solid #a5a5a5; line-height: 16px; }
.url { margin-left: 6px; }
.scheme { color: #0b8043; }
.dim { color: #808080; }
.zoomout { margin: 0 11px 0 auto; }
.extensions { display: flex; gap: 8px; margin-left: 9px; }

.bookmarks { height: 23px; flex: none; display: flex; align-items: flex-start; padding: 2px 0 0 12px; box-sizing: border-box; border-bottom: 1px solid #cbcfcf; font-size: 12px; line-height: 16px; color: #000; }
.bookmark { display: flex; align-items: center; gap: 4px; flex: none; }
.more { margin-left: auto; width: 19px; font-size: 16px; line-height: 15px; color: #555; }

.page { flex: 1; min-height: 0; margin-top: 1px; display: flex; flex-direction: column; align-items: center; background: #e3f1f0; font-family: "Liberation Serif", "Times New Roman", serif; color: #000; }
h1 { margin: 15px 0 10px; font-size: 42px; line-height: 48px; }
button { width: 160px; height: 43px; flex: none; padding: 0; border: 0; border-radius: 2px; background: #ff000d; font: 17.500px/43px Inter, sans-serif; color: #000; box-shadow: 0 0 1px #a66; }
.board { display: grid; grid-template-columns: repeat(4, 75px); grid-auto-rows: 112.500px; gap: 15px 32px; margin-top: 34px; }
.card { border-radius: 4px; background: #008480; box-shadow: 0 3px 7px rgba(0, 0, 0, .6); }
.notes { width: 450px; margin-top: 38px; font-size: 18px; line-height: 20px; }
.notes p { margin: 0 0 20px; }
</style>
